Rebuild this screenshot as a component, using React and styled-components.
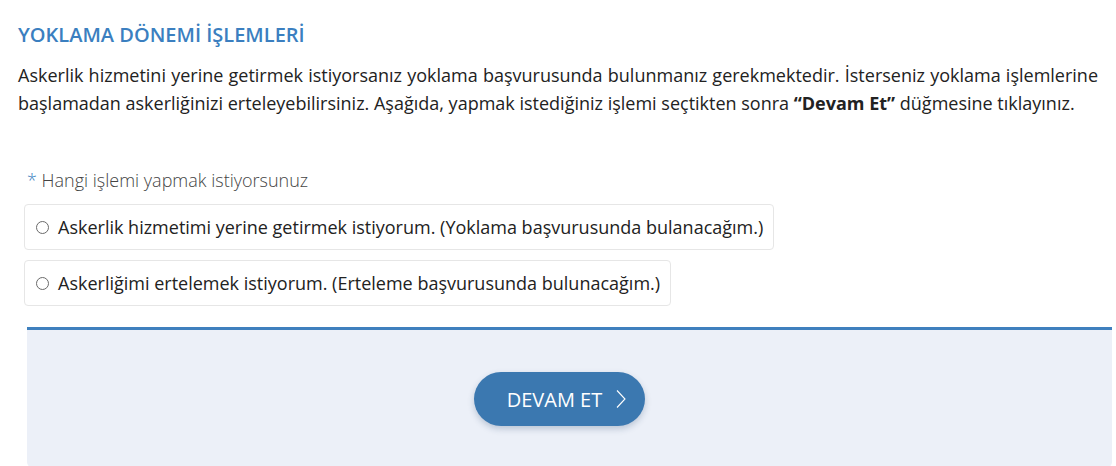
import React, { useState } from 'react';
import styled, { createGlobalStyle } from 'styled-components';

const GlobalStyle = createGlobalStyle`
  body {
    margin: 0;
    background: #fff;
    font-family: "Open Sans", "Noto Sans", sans-serif;
    color: #222;
  }
`;

const options = [
  { id: 'yoklama', label: 'Askerlik hizmetimi yerine getirmek istiyorum. (Yoklama başvurusunda bulanacağım.)' },
  { id: 'erteleme', label: 'Askerliğimi ertelemek istiyorum. (Erteleme başvurusunda bulunacağım.)' },
];

function App() {
  const [selected, setSelected] = useState(null);

  return (
    <Page>
      <GlobalStyle />
      <Title>YOKLAMA DÖNEMİ İŞLEMLERİ</Title>
      <Intro>
        Askerlik hizmetini yerine getirmek istiyorsanız yoklama başvurusunda bulunmanız gerekmektedir. İsterseniz yoklama işlemlerine
        başlamadan askerliğinizi erteleyebilirsiniz. Aşağıda, yapmak istediğiniz işlemi seçtikten sonra <strong>“Devam Et”</strong> düğmesine tıklayınız.
      </Intro>

      <Form>
        <Label>
          <span className="req">*</span> Hangi işlemi yapmak istiyorsunuz
        </Label>
        <OptionList>
          {options.map(o => (
            <Option key={o.id} onClick={() => setSelected(o.id)}>
              <Radio checked={selected === o.id} />
              <span>{o.label}</span>
            </Option>
          ))}
        </OptionList>
      </Form>

      <Footer>
        <Button type="button">
          DEVAM ET
          <svg width="10" height="20" viewBox="0 0 10 20" fill="none">
            <path d="M1 1.5l8 8.5-8 8.5" stroke="#fff" strokeWidth="1.1" />
          </svg>
        </Button>
      </Footer>
    </Page>
  );
}

const Page = styled.div`
  padding: 20px 0 0 18px;
  width: 1080px;
`;

const Title = styled.h2`
  margin: 0;
  font-size: 20px;
  line-height: 30px;
  font-weight: 600;
  color: #3b7fc0;
`;

const Intro = styled.p`
  margin: 11px 0 0;
  font-size: 18px;
  line-height: 28px;
  color: #222;
  text-align: justify;

  strong {
    font-weight: 700;
  }
`;

const Form = styled.div`
  margin-top: 51px;
  padding-left: 6px;
`;

const Label = styled.div`
  padding-left: 3px;
  font-size: 18px;
  line-height: 24px;
  font-weight: 300;
  color: #444;

  .req {
    color: #3b7fc0;
  }
`;

const OptionList = styled.div`
  display: flex;
  flex-direction: column;
  align-items: flex-start;
  gap: 10px;
  margin-top: 12px;
`;

const Option = styled.label`
  display: flex;
  align-items: center;
  gap: 9px;
  height: 44px;
  padding: 0 10px 0 11px;
  border: 1px solid #e6e6e6;
  border-radius: 4px;
  font-size: 18px;
  color: #222;
  cursor: pointer;
`;

const Radio = styled.span`
  box-sizing: border-box;
  width: 13px;
  height: 13px;
  border-radius: 50%;
  border: 1px solid #6a6a6a;
  background: ${props => (props.checked ? '#3b7fc0' : '#fff')};
`;

const Footer = styled.div`
  display: flex;
  justify-content: center;
  align-items: center;
  margin: 21px 0 0 9px;
  width: 1085px;
  height: 138px;
  background: #ecf0f8;
  border-top: 3px solid #3f80be;
  border-radius: 0 0 6px 6px;
`;

const Button = styled.button`
  display: flex;
  align-items: center;
  gap: 14px;
  height: 54px;
  padding: 0 19px 0 33px;
  border: none;
  border-radius: 27px;
  background: #3b78b0;
  color: #fff;
  font-family: "Open Sans", sans-serif;
  font-size: 20px;
  box-shadow: 0 3px 6px rgba(40, 70, 110, 0.25);
  margin-left: -20px;
  cursor: pointer;
`;

export default App;
